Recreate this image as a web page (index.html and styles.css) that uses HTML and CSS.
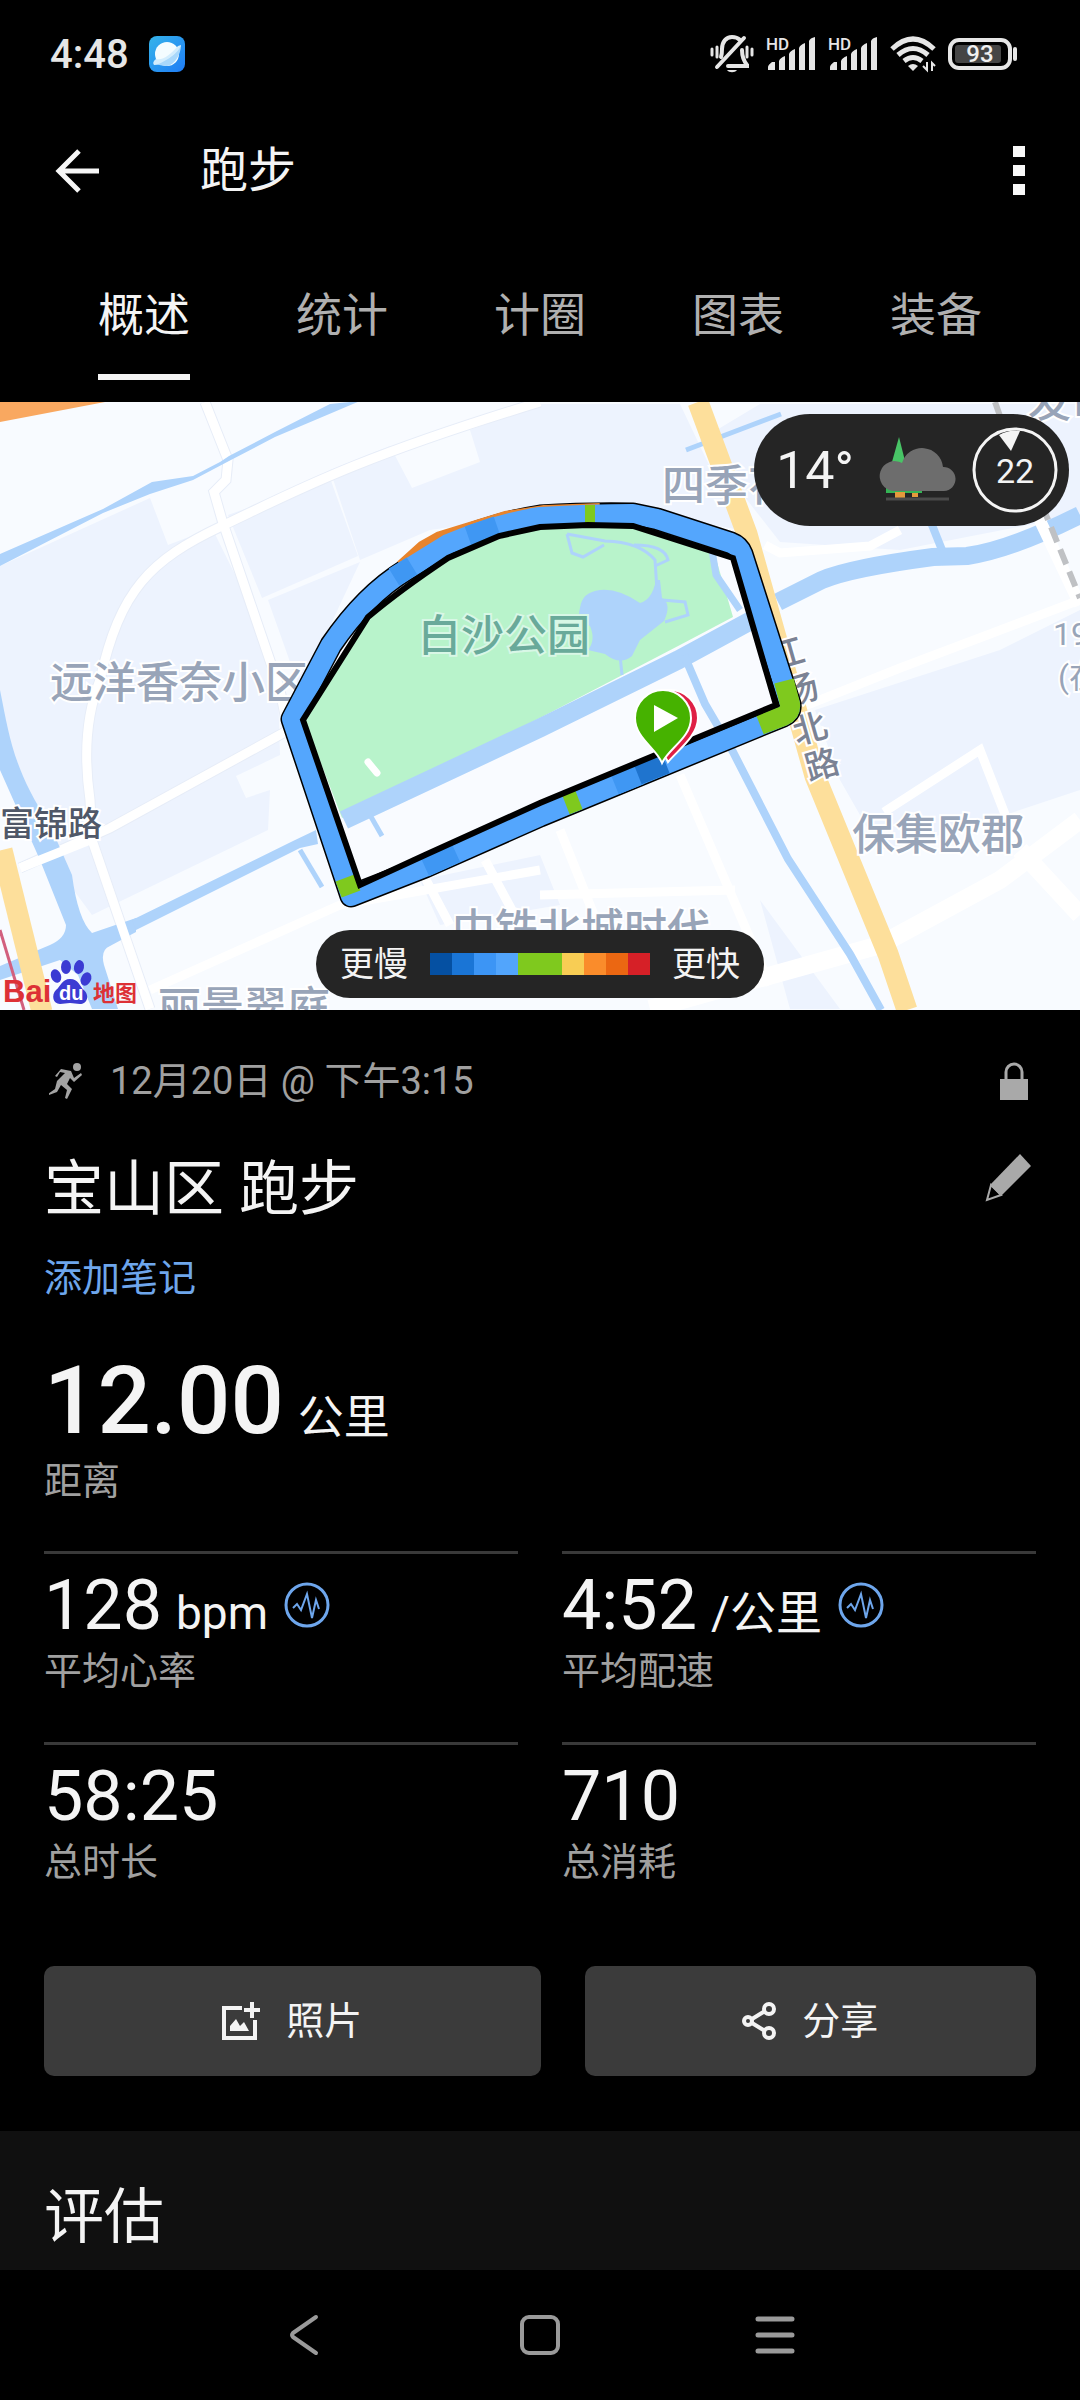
FILE: index.html
```html
<!DOCTYPE html>
<html lang="zh-CN">
<head>
    <meta charset="UTF-8">
    <meta name="viewport" content="width=device-width, initial-scale=1.0">
    <title>跑步</title>
    <link rel="stylesheet" href="styles.css">
</head>
<body>
    <div class="status-bar">
        <span class="clock">4:48</span>
        <svg class="app-icon" width="36" height="36" viewBox="0 0 36 36">
            <defs>
                <linearGradient id="appBg" x1="0" y1="0" x2="1" y2="1">
                    <stop offset="0" stop-color="#35b4ea"/>
                    <stop offset="1" stop-color="#1f7cf5"/>
                </linearGradient>
            </defs>
            <rect width="36" height="36" rx="8" fill="url(#appBg)"/>
            <circle cx="18" cy="18" r="12" fill="#f4fcff"/>
            <path d="M5 29C4 26 5 25 7 24 16 26 25 20 29 12l3-3C32 18 26 29 18 30 13 30 10 28 5 29z" fill="#a9d8fb"/>
            <path d="M7 23C14 25 22 18 29 10l3-1C31 16 14 28 5 29q-2-3 2-6z" fill="#d3edfd"/>
        </svg>
        <div class="status-icons">
            <svg width="44" height="38" viewBox="0 0 44 38" fill="none" stroke="#e6e6e6" stroke-width="3" stroke-linecap="round">
                <path d="M11 22c1-3 1-5 1-8 0-7 4-12 10-12 3 0 6 1 8 3M32 15c0 6 1 10 5 15v1H18" stroke-width="4"/>
                <path d="M7 32L34 3" stroke-width="4"/>
                <path d="M17 35h10c-2 3-8 3-10 0z" fill="#e6e6e6" stroke="none"/>
                <path d="M2 14v6M7 12v10M37 12v10M42 14v6"/>
            </svg>
            <svg width="50" height="34" viewBox="0 0 50 34" fill="#e6e6e6">
                <text x="0" y="13" font-size="17" font-weight="500">HD</text>
                <path d="M2 33v-3q0-2 4-5h3v8zM13 33v-9q1-3 6-5v14zM23 33V17q1-3 6-5v21zM33 33V11q1-3 6-5v27zM43 33V4q1-3 6-4v33z"/>
            </svg>
            <svg width="50" height="34" viewBox="0 0 50 34" fill="#e6e6e6">
                <text x="0" y="13" font-size="17" font-weight="500">HD</text>
                <path d="M2 33v-3q0-2 4-5h3v8zM13 33v-9q1-3 6-5v14zM23 33V17q1-3 6-5v21zM33 33V11q1-3 6-5v27zM43 33V4q1-3 6-4v33z"/>
            </svg>
            <svg width="46" height="36" viewBox="0 0 46 36" fill="none" stroke="#e6e6e6" stroke-width="5">
                <path d="M2 13Q23-7 44 13"/>
                <path d="M8 19q15-13 30 0"/>
                <path d="M14 25q9-7 18 0"/>
                <path d="M18 30q5-4 10 0l-5 5z" fill="#e6e6e6" stroke="none"/>
                <path d="M37 26v8l-4-4M42 35v-8l3 3" stroke-width="2"/>
            </svg>
            <svg width="70" height="32" viewBox="0 0 70 32">
                <rect x="2" y="2" width="60" height="28" rx="9" fill="none" stroke="#e6e6e6" stroke-width="4"/>
                <rect x="7" y="7" width="46" height="18" rx="3" fill="#454545"/>
                <path d="M67 11v10" stroke="#e6e6e6" stroke-width="4" stroke-linecap="round"/>
                <text x="32" y="24" font-size="24" font-weight="500" text-anchor="middle" fill="#f0f0f0">93</text>
            </svg>
        </div>
    </div>

    <header class="app-bar">
        <button class="icon-button" aria-label="返回">
            <svg width="44" height="44" viewBox="0 0 44 44" fill="none" stroke="#f6f6f6" stroke-width="5">
                <path d="M44 22H4M24 2L4 22l20 20"/>
            </svg>
        </button>
        <h1>跑步</h1>
        <button class="icon-button" aria-label="更多">
            <svg width="12" height="50" viewBox="0 0 12 50" fill="#f8f8f8">
                <path d="M0 0h12v11H0zM0 19h12v11H0zM0 38h12v11H0z"/>
            </svg>
        </button>
    </header>

    <nav class="tabs">
        <a class="active" href="#overview">概述</a>
        <a href="#stats">统计</a>
        <a href="#laps">计圈</a>
        <a href="#charts">图表</a>
        <a href="#gear">装备</a>
    </nav>

    <div class="map">
        <svg class="map-canvas" viewBox="0 402 1080 608">
            <rect y="402" width="1080" height="608" fill="#f8fbff"/>
            <!-- blocks -->
            <g fill="#edf3fe">
                <path d="M0 566L150 498 168 545 212 528 260 625 278 690 280 755 236 776 246 798 270 790 268 830 92 915 44 850 0 720z"/>
                <path d="M228 515L330 478 358 556 262 598zM268 600L360 562 300 690z"/>
                <path d="M330 470L390 446 412 488 480 462 470 430 540 404H680L740 530 660 515H540L430 530 360 560z"/>
                <path d="M815 710L1000 650 1080 610V790L960 830 880 850 840 780z"/>
                <path d="M700 440L760 404H1080V515L900 550 780 542z"/>
                <path d="M420 880L540 855 560 905 440 925zM760 900L840 1009H790z"/>
            </g>
            <!-- minor roads -->
            <g fill="none" stroke="#e7edf8" stroke-width="11">
                <path d="M205 402L228 460 226 480 214 492 222 520 280 690 288 730"/>
                <path d="M100 680C120 590 150 560 222 526S350 460 540 402M100 680Q80 730 90 800L92 840 150 1009"/>
                <path d="M20 868L110 828 285 732"/>
            </g>
            <g fill="none" stroke="#ffffff" stroke-width="9">
                <path d="M205 402L228 460 226 480 214 492 222 520 280 690 288 730"/>
                <path d="M100 680C120 590 150 560 222 526S350 460 540 402M100 680Q80 730 90 800L92 840"/>
                <path d="M20 868L110 828 285 732M150 990L340 905 540 870"/>
                <path d="M388 808L450 925M485 860L520 925M560 830L600 930M680 775L770 985M540 895L735 890"/>
                <path d="M765 545L780 553 870 546 900 530M740 720L810 704 900 668 1080 600"/>
                <path d="M884 812L980 750 1015 840"/>
            </g>
            <g fill="none" stroke="#ffffff" stroke-width="18">
                <path d="M650 1009L880 945 1000 880 1080 820M1020 850L1080 915"/>
            </g>
            <!-- water -->
            <g fill="#aed3fb">
                <path d="M0 554L103 509 152 482 193 476 220 462 229 456 275 432 330 404 360 401 275 437 229 461 193 480 150 494 103 513 0 566z"/>
                <path d="M0 690C10 740 14 770 50 825L72 875Q78 920 92 933L136 918 136 932 110 946Q100 950 104 965L118 1009H92L78 975 60 960 0 980V966L50 945Q66 938 66 925L40 860 0 770z"/>
                <path d="M132 920L293 841 316 830 318 844 300 848 136 930z"/>
            </g>
            <path d="M20 868L95 838M92 840L150 1009" fill="none" stroke="#ffffff" stroke-width="9"/>
            <g fill="none" stroke="#aed3fb">
                <path d="M300 850L322 887" stroke-width="5"/>
                <path d="M778 602L822 580Q850 568 933 557L967 556Q1010 550 1080 515" stroke-width="18"/>
                <path d="M686 450L781 414" stroke-width="5"/>
                <path d="M930 520L942 550" stroke-width="8"/>
            </g>
            <!-- main roads -->
            <path d="M0 402H105L0 422z" fill="#f9a860"/>
            <g fill="none" stroke="#fddf9b" stroke-width="21">
                <path d="M698 402L747 534 815 776 888 954 907 1010"/>
                <path d="M2 850L42 1012"/>
            </g>
            <path d="M0 930L24 1010" stroke="#d2607e" stroke-width="3"/>
            <path d="M1035 510L1080 605" stroke="#ffffff" stroke-width="12"/>
            <path d="M1042 505L1080 598" stroke="#bfc1c4" stroke-width="6" stroke-dasharray="16 8"/>
            <path d="M995 402L1005 430" stroke="#bfc1c4" stroke-width="6"/>

            <!-- park inside the loop -->
            <path d="M292 719L331 645 406 570 499 527 588 514 657 519 741 548 790 710 351 896z" fill="#f9fbff"/>
            <path d="M304 719L370 615 448 556 545 524 633 524 712 545 733 617 680 645 540 718 342 818z" fill="#b8f3cb"/>
            <path d="M714 548L738 560 752 610 735 600z" fill="#f9fbff"/>
            <g fill="none" stroke="#aed3fb">
                <path d="M344 820L540 728 678 660 752 620" stroke-width="19"/>
                <path d="M712 550L716 575 740 610" stroke-width="7"/>
                <path d="M684 655L705 704 733 752 788 859 850 954 881 1010" stroke-width="8"/>
                <path d="M370 815L382 836" stroke-width="5"/>
                <path d="M567 534L605 541Q640 542 655 560L657 590M567 534L572 553 583 557 604 545M634 545Q665 545 668 560L655 566M662 600L685 602 688 615 665 622M620 655L622 675" stroke-width="3"/>
            </g>
            <path d="M580 608Q582 592 600 590T640 603Q652 600 656 580H660L662 598Q672 604 664 621L640 640 632 656Q620 666 605 654L588 650Q596 640 590 626 576 620 580 608z" fill="#aed3fb"/>
            <path d="M368 762L377 773" stroke="#ffffff" stroke-width="7" stroke-linecap="round"/>

            <!-- place names -->
            <g class="place">
                <text x="50" y="698">远洋香奈小区</text>
                <text x="662" y="501">四季花</text>
                <text x="852" y="850">保集欧郡</text>
                <text x="452" y="945">中铁北城时代</text>
                <text x="158" y="1023">丽景翠庭</text>
                <text x="1028" y="417">发市</text>
            </g>
            <text class="place place-park" x="418" y="651">白沙公园</text>
            <text class="place place-small" x="1053" y="645">19</text>
            <text class="place place-small" x="1058" y="688">(在</text>
            <text class="road" x="0" y="836">富锦路</text>
            <g class="road road-side">
                <text transform="translate(774 670) rotate(-16)">江</text>
                <text transform="translate(788 706) rotate(-16)">杨</text>
                <text transform="translate(797 745) rotate(-16)">北</text>
                <text transform="translate(809 781) rotate(-16)">路</text>
            </g>

            <!-- route coloured by pace -->
            <g fill="none" stroke-linejoin="round">
                <path d="M425 867L351 896 292 719 331 645Q365 595 406 570L448 543Q500 522 540 516 590 513 633 514L657 519 731 543Q739 546 742 554L790 704Q791 712 783 716L540 816z" stroke="#000000" stroke-width="23"/>
                <path d="M404 569L425 550 441 541 506 521 545 515 600 513" stroke="#e8842c" stroke-width="20"/>
                <path d="M425 867L351 896 292 719 331 645Q365 595 406 570L448 544Q500 523 540 517 590 514 633 514L657 519 731 543Q739 546 742 554L790 704Q791 712 783 716L540 816z" stroke="#54a6fd" stroke-width="20"/>
            </g>
            <g fill="none" stroke-width="20">
                <path d="M345 878L351 894M566 805L579 800M784 681L790 704Q791 712 783 716L760 725" stroke="#7fc91e"/>
                <path d="M585 515H595" stroke="#7fc91e"/>
                <path d="M394 577L412 566M468 536L497 526M425 867L456 853M615 785L640 775" stroke="#3f97f3"/>
                <path d="M638 775L666 764" stroke="#1f74ce"/>
            </g>
            <path d="M360 885L303 720 368 617Q400 590 448 558L499 536 540 527 588 525 633 526 733 558 776 705 540 803 425 855z" fill="none" stroke="#000000" stroke-width="6"/>
            <!-- end and start pins -->
            <path d="M668 762C662 748 642 736 642 718A28 28 0 1 1 698 718C698 736 678 750 668 762z" fill="#df2045" stroke="#ffffff" stroke-width="2"/>
            <path d="M662 763C656 748 635 738 635 718A28 28 0 1 1 691 718C691 738 669 748 662 763z" fill="#46b200" stroke="#ffffff" stroke-width="2"/>
            <path d="M654 705L678 718 654 732z" fill="#ffffff"/>

            <!-- map provider -->
            <g class="provider">
                <text x="3" y="1002" font-size="31" font-weight="700">Bai</text>
                <g fill="#3b3bd3">
                    <ellipse cx="56" cy="976" rx="5" ry="7" transform="rotate(-20 56 976)"/>
                    <ellipse cx="66" cy="967" rx="5" ry="7"/>
                    <ellipse cx="79" cy="967" rx="5" ry="7" transform="rotate(12 79 967)"/>
                    <ellipse cx="86" cy="979" rx="5" ry="7" transform="rotate(25 86 979)"/>
                    <path d="M70 979c9 0 9 7 14 11 6 6 3 14-4 14-4 0-6-1-10-1s-6 1-10 1c-7 0-9-9-4-14 5-4 6-11 14-11z"/>
                </g>
                <text x="59" y="1000" font-size="20" font-weight="700" class="provider-mark">du</text>
                <text x="93" y="1001" font-size="22" font-weight="700">地图</text>
            </g>
        </svg>

        <div class="weather">
            <span class="temperature">14°</span>
            <svg width="78" height="66" viewBox="0 0 78 66">
                <path d="M21 0L29 32H12z" fill="#48c466"/>
                <path d="M8 51H44v5H8z" fill="#34b455"/>
                <path d="M17 55H27v6H17zM34 56h6v4H34z" fill="#e59a3c"/>
                <path d="M8 62H71" stroke="#4b4b4b" stroke-width="3"/>
                <path d="M15 54A15 15 0 1 1 24 26 21 21 0 0 1 65 30 12 12 0 1 1 66 54z" fill="#6d6d6d"/>
            </svg>
            <svg width="86" height="86" viewBox="0 0 86 86">
                <circle cx="43" cy="43" r="41" fill="none" stroke="#f4f4f4" stroke-width="3"/>
                <path d="M27 8Q38 2 48 4L39 24z" fill="#f4f4f4"/>
                <text x="43" y="56" font-size="34" text-anchor="middle" fill="#f4f4f4">22</text>
            </svg>
        </div>

        <div class="legend">
            <span>更慢</span>
            <div class="scale">
                <i class="pace-1"></i><i class="pace-2"></i><i class="pace-3"></i><i class="pace-4"></i><i class="pace-5"></i><i class="pace-5"></i><i class="pace-6"></i><i class="pace-7"></i><i class="pace-8"></i><i class="pace-9"></i>
            </div>
            <span>更快</span>
        </div>
    </div>

    <main>
        <section class="activity" id="overview">
            <div class="meta">
                <svg width="36" height="38" viewBox="0 0 36 38" fill="#a3a3a3">
                    <circle cx="28" cy="5" r="4"/>
                    <path d="M12 7l10 2 3 7 7-5 1 2-8 7-4-4-3 6 5 5-5 10-2-1 2-8-6-5-4 7-8 3-1-1 7-5 2-8 8-8-5-1-3 5-2-1z"/>
                </svg>
                <time datetime="12-20T15:15">12月20日 @ 下午3:15</time>
                <svg width="28" height="38" viewBox="0 0 28 38" fill="#a9a9a9">
                    <path d="M0 17H28V38H0z"/>
                    <path d="M6 18V10a8 8 0 0 1 16 0v8" fill="none" stroke="#a9a9a9" stroke-width="3"/>
                </svg>
            </div>
            <div class="title-row">
                <h2>宝山区 跑步</h2>
                <button class="icon-button" aria-label="编辑">
                    <svg width="46" height="48" viewBox="0 0 46 48" fill="#a9a9a9">
                        <path d="M35 0L46 12 16 42 5 31z"/>
                        <path d="M6 31L2 46 16 41z" fill="none" stroke="#a9a9a9" stroke-width="2"/>
                    </svg>
                </button>
            </div>
            <a class="note-link" href="#note">添加笔记</a>

            <div class="value distance"><strong>12.00</strong><span class="unit">公里</span></div>
            <p class="label">距离</p>

            <div class="stats">
                <div class="stat">
                    <div class="value">
                        <span>128</span><span class="unit">bpm</span>
                        <svg width="46" height="46" viewBox="0 0 46 46" fill="none" stroke="#6ea6ec" stroke-width="3">
                            <circle cx="23" cy="23" r="21"/>
                            <path d="M9 26l4-4 4 6 6-16 5 24 4-18 3 9" stroke-width="2"/>
                        </svg>
                    </div>
                    <p class="label">平均心率</p>
                </div>
                <div class="stat">
                    <div class="value">
                        <span>4:52</span><span class="unit">/公里</span>
                        <svg width="46" height="46" viewBox="0 0 46 46" fill="none" stroke="#6ea6ec" stroke-width="3">
                            <circle cx="23" cy="23" r="21"/>
                            <path d="M9 26l4-4 4 6 6-16 5 24 4-18 3 9" stroke-width="2"/>
                        </svg>
                    </div>
                    <p class="label">平均配速</p>
                </div>
                <div class="stat">
                    <div class="value"><span>58:25</span></div>
                    <p class="label">总时长</p>
                </div>
                <div class="stat">
                    <div class="value"><span>710</span></div>
                    <p class="label">总消耗</p>
                </div>
            </div>

            <div class="actions">
                <button>
                    <svg width="38" height="38" viewBox="0 0 38 38" fill="#f4f4f4">
                        <path d="M20 6H2V36H33V18" fill="none" stroke="#f4f4f4" stroke-width="4"/>
                        <path d="M28 0h4v6h6v4h-6v6h-4v-6h-6V6h6zM8 29v-5l6-7 4 7 4-4 5 9z"/>
                    </svg>
                    照片
                </button>
                <button>
                    <svg width="34" height="38" viewBox="0 0 34 38" fill="none" stroke="#f4f4f4" stroke-width="4">
                        <circle cx="27" cy="7" r="5"/>
                        <circle cx="6" cy="19" r="4"/>
                        <circle cx="27" cy="31" r="5"/>
                        <path d="M10 17l13-8M10 21l13 8"/>
                    </svg>
                    分享
                </button>
            </div>
        </section>

        <section class="rating">
            <h2>评估</h2>
        </section>
    </main>

    <footer class="system-nav">
        <button class="icon-button" aria-label="返回">
            <svg width="42" height="42" viewBox="0 0 42 42" fill="none" stroke="#9a9a9a" stroke-width="4" stroke-linecap="round" stroke-linejoin="round">
                <path d="M32 3L9 19q-2 2 0 4L32 39"/>
            </svg>
        </button>
        <button class="icon-button" aria-label="主屏幕">
            <svg width="42" height="42" viewBox="0 0 42 42" fill="none" stroke="#9a9a9a" stroke-width="4">
                <rect x="3" y="3" width="36" height="36" rx="7"/>
            </svg>
        </button>
        <button class="icon-button" aria-label="最近任务">
            <svg width="42" height="42" viewBox="0 0 42 42" stroke="#9a9a9a" stroke-width="5" stroke-linecap="round">
                <path d="M4 5H38M4 21H38M4 37H38"/>
            </svg>
        </button>
    </footer>
</body>
</html>
```

FILE: styles.css
```css
body {
    font-family: Roboto, "Noto Sans CJK SC", sans-serif;
    background-color: #000;
    color: #f4f4f4;
    margin: 0;
}
h1, h2, p {
    font-weight: 400;
    margin: 0;
}
a {
    text-decoration: none;
}
button {
    font-family: inherit;
    color: inherit;
    border: none;
    cursor: pointer;
}
svg {
    display: block;
    flex-shrink: 0;
}
.icon-button {
    background: none;
    padding: 0;
}

/* status bar */
.status-bar {
    display: flex;
    align-items: center;
    height: 108px;
    padding: 0 62px 0 50px;
}
.clock {
    font-size: 40px;
    font-weight: 500;
    color: #e6e6e6;
    margin-right: 20px;
}
.status-icons {
    display: flex;
    align-items: center;
    gap: 12px;
    margin-left: auto;
}
.status-icons svg {
    overflow: visible;
}

/* title bar and tabs */
.app-bar {
    display: flex;
    align-items: center;
    height: 126px;
    padding: 0 55px;
}
.app-bar h1 {
    flex: 1;
    font-size: 48px;
    line-height: 60px;
    margin-left: 101px;
}
.tabs {
    display: flex;
    padding: 51px 45px 22px;
    justify-content: space-around;
}
.tabs a {
    font-size: 46px;
    line-height: 60px;
    padding-bottom: 29px;
    border-bottom: 6px solid transparent;
    color: #b0b0b0;
}
.tabs .active {
    color: #f4f4f4;
    border-color: #f4f4f4;
}

/* map */
.map {
    position: relative;
}
.map-canvas {
    width: 100%;
    height: auto;
}
.place {
    font-size: 43px;
    font-weight: 500;
    fill: #98a4b8;
    stroke: #fff;
    stroke-width: 4px;
    paint-order: stroke;
}
.place-park {
    fill: #69aa9a;
    stroke: #d8f7e6;
}
.place-small {
    font-size: 32px;
    font-weight: 400;
}
.road {
    font-size: 34px;
    font-weight: 500;
    fill: #505868;
    stroke: #fff;
    stroke-width: 4px;
    paint-order: stroke;
}
.road-side {
    fill: #7b8294;
}
.provider {
    font-family: "Liberation Sans", "Noto Sans CJK SC", sans-serif;
    fill: #dd3136;
}
.provider-mark {
    fill: #fff;
}
.weather, .legend {
    position: absolute;
    display: flex;
    align-items: center;
    background-color: #252525;
}
.weather {
    top: 12px;
    right: 11px;
    height: 112px;
    padding: 0 11px 0 22px;
    border-radius: 56px;
}
.temperature {
    font-size: 52px;
    margin-right: 24px;
}
.weather svg + svg {
    margin-left: 16px;
}
.legend {
    bottom: 12px;
    left: 50%;
    transform: translateX(-50%);
    gap: 22px;
    height: 68px;
    padding: 0 24px;
    border-radius: 34px;
    font-size: 34px;
    line-height: 44px;
    white-space: nowrap;
}
.scale {
    display: flex;
}
.scale i {
    width: 22px;
    height: 22px;
}
.pace-1 { background-color: #0550a2; }
.pace-2 { background-color: #1a75d6; }
.pace-3 { background-color: #3c95f5; }
.pace-4 { background-color: #52a5fc; }
.pace-5 { background-color: #7fc91e; }
.pace-6 { background-color: #f8cd54; }
.pace-7 { background-color: #fa8c2b; }
.pace-8 { background-color: #eb6712; }
.pace-9 { background-color: #d62027; }

/* activity summary */
.activity {
    padding: 49px 44px 55px;
}
.meta {
    display: flex;
    align-items: center;
    padding: 0 8px 0 5px;
    font-size: 38px;
    line-height: 44px;
    color: #a0a0a0;
}
.meta time {
    flex: 1;
    margin-left: 25px;
}
.title-row {
    display: flex;
    align-items: flex-start;
    justify-content: space-between;
    margin-top: 51px;
    padding-right: 5px;
}
h2 {
    font-size: 60px;
    line-height: 72px;
}
.note-link {
    display: block;
    margin-top: 30px;
    font-size: 38px;
    line-height: 44px;
    color: #6ea6ec;
}
.value {
    display: flex;
    align-items: baseline;
    font-size: 70px;
    line-height: 64px;
}
.unit {
    font-size: 46px;
    line-height: 46px;
    margin-left: 14px;
}
.value svg {
    align-self: center;
    margin-left: 16px;
}
.distance {
    margin-top: 55px;
    font-size: 94px;
    line-height: 92px;
}
.distance strong {
    font-weight: 500;
}
.label {
    margin-top: 12px;
    font-size: 38px;
    line-height: 44px;
    color: #a0a0a0;
}
.stats {
    display: grid;
    grid-template-columns: 1fr 1fr;
    column-gap: 44px;
    margin-top: 48px;
}
.stat {
    border-top: 3px solid #393939;
    padding: 19px 0 49px;
}
.actions {
    display: grid;
    grid-template-columns: 11fr 10fr;
    gap: 44px;
    margin-top: 33px;
}
.actions button {
    display: flex;
    align-items: center;
    justify-content: center;
    gap: 26px;
    height: 110px;
    font-size: 38px;
    line-height: 44px;
    background-color: #3b3b3b;
    border-radius: 10px;
}
.rating {
    padding: 51px 44px 16px;
    background-color: #101010;
}

/* system navigation */
.system-nav {
    display: flex;
    align-items: center;
    justify-content: center;
    gap: 193px;
    height: 130px;
}
```
